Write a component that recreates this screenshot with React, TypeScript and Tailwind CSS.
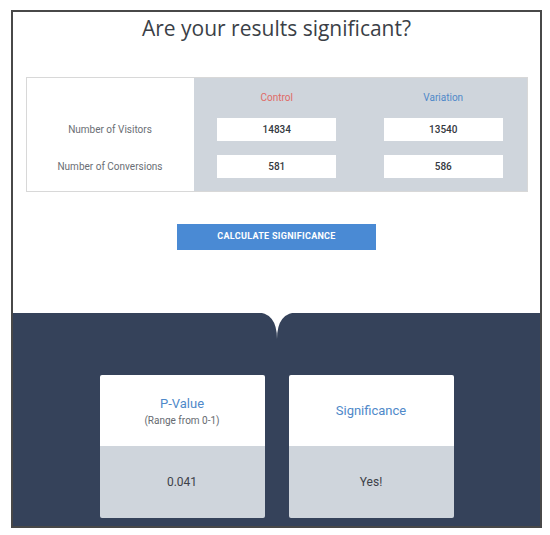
import { useState } from 'react';

const cell = "h-[23px] flex items-center justify-center";

const ResultCard = ({ title, sub, value }: { title: string; sub?: string; value: string }) => (
    <div className="w-[165px] h-[143px] rounded-[2px] overflow-hidden flex flex-col">
        <div className="h-[71px] bg-white flex flex-col items-center justify-center">
            <p className={`text-[13px] text-[#4f89c9] leading-none ${sub ? 'mt-[2px]' : ''}`}>{title}</p>
            {sub && <p className="text-[10px] text-[#666a70] mt-[6px] leading-none">{sub}</p>}
        </div>
        <div className="flex-1 bg-[#cfd5dc] flex items-center justify-center">
            <p className="text-[12px] text-[#3d4148]">{value}</p>
        </div>
    </div>
);

const App = () => {
    const [control] = useState({ visitors: '14834', conversions: '581' });
    const [variation] = useState({ visitors: '13540', conversions: '586' });

    return (
        <div className="w-[550px] h-[535px] bg-white pt-[10px] pl-[11px]" style={{ fontFamily: 'Roboto, sans-serif' }}>
            <div className="w-[531px] h-[518px] border-2 border-[#484848] flex flex-col">
                <h1 className="text-center text-[21px] leading-[30px] text-[#3b3f47] mt-[1px]" style={{ fontFamily: '"Open Sans", sans-serif' }}>
                    Are your results significant?
                </h1>

                <div className="mt-[34px] mx-auto w-[502px] h-[115px] border border-[#d8d8d8] flex">
                    <div className="w-[167px] bg-white flex flex-col pt-[13px]">
                        <div className="h-[14px]" />
                        <div className={`${cell} mt-[13px] text-[10px] text-[#6a6e74]`}>Number of Visitors</div>
                        <div className={`${cell} mt-[14px] text-[10px] text-[#6a6e74]`}>Number of Conversions</div>
                    </div>
                    <div className="flex-1 bg-[#cfd5dc] flex">
                        <div className="flex-1 flex flex-col items-center pt-[13px]">
                            <div className="h-[14px] text-[10px] text-[#e06a66] leading-[14px]">Control</div>
                            <div className={`${cell} mt-[13px] w-[119px] bg-white text-[10px] font-medium text-[#34383e]`}>{control.visitors}</div>
                            <div className={`${cell} mt-[14px] w-[119px] bg-white text-[10px] font-medium text-[#34383e]`}>{control.conversions}</div>
                        </div>
                        <div className="flex-1 flex flex-col items-center pt-[13px]">
                            <div className="h-[14px] text-[10px] text-[#4f89c9] leading-[14px]">Variation</div>
                            <div className={`${cell} mt-[13px] w-[119px] bg-white text-[10px] font-medium text-[#34383e]`}>{variation.visitors}</div>
                            <div className={`${cell} mt-[14px] w-[119px] bg-white text-[10px] font-medium text-[#34383e]`}>{variation.conversions}</div>
                        </div>
                    </div>
                </div>

                <button className="mt-[32px] mx-auto w-[199px] h-[26px] bg-[#4a8ad4] text-white text-[9px] font-bold tracking-[0.3px]">
                    CALCULATE SIGNIFICANCE
                </button>

                <div className="mt-[63px] flex-1 bg-[#35425a] relative flex justify-center gap-[24px] pt-[62px]">
                    <svg className="absolute left-1/2 -translate-x-1/2 top-[-1px]" width="44" height="27" viewBox="0 0 44 27">
                        <path d="M0 0 Q22 0 22 27 Q22 0 44 0 Z" fill="#ffffff" />
                    </svg>
                    <ResultCard title="P-Value" sub="(Range from 0-1)" value="0.041" />
                    <ResultCard title="Significance" value="Yes!" />
                </div>
            </div>
        </div>
    );
};

export default App;
